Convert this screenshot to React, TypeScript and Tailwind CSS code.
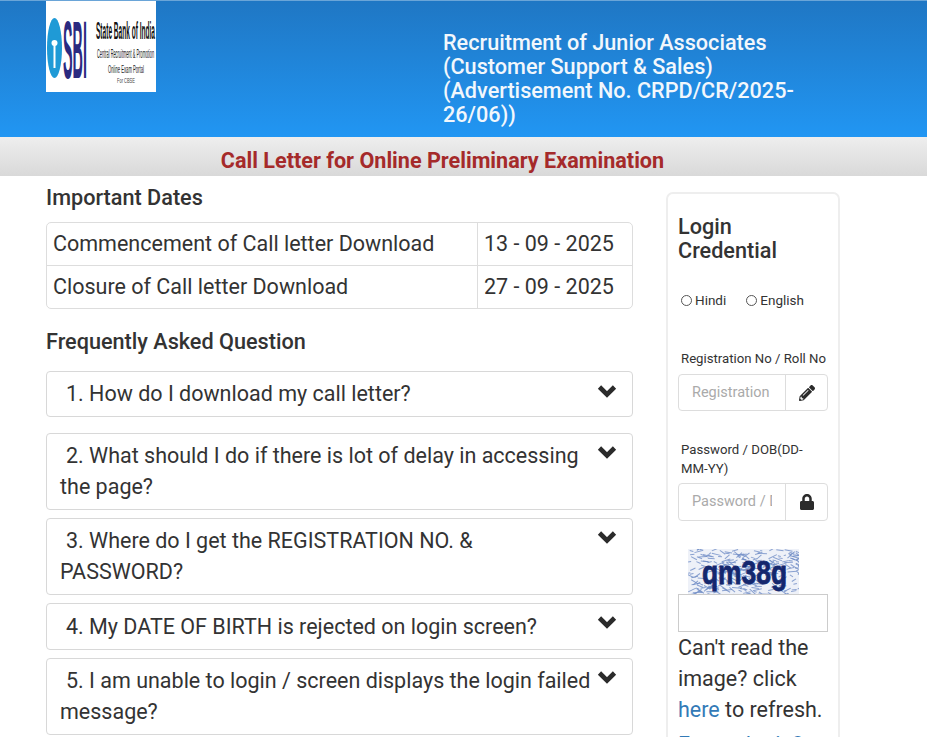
import React from 'react';
import { FaLock, FaPencilAlt } from 'react-icons/fa';

const faqs = [
  { q: '1. How do I download my call letter?', rest: '', h: 'h-[46px] mb-[16px] pt-[6px]', top: 'top-[12px]' },
  { q: '2. What should I do if there is lot of delay in accessing', rest: 'the page?', h: 'h-[77px] mb-[8px] pt-[6px]', top: 'top-[11px]' },
  { q: '3. Where do I get the REGISTRATION NO. &', rest: 'PASSWORD?', h: 'h-[77px] mb-[8px] pt-[6px]', top: 'top-[11px]' },
  { q: '4. My DATE OF BIRTH is rejected on login screen?', rest: '', h: 'h-[47px] mb-[8px] pt-[7px]', top: 'top-[11px]' },
  { q: '5. I am unable to login / screen displays the login failed', rest: 'message?', h: 'h-[77px] mb-[8px] pt-[6px]', top: 'top-[11px]' },
];

const SbiLogo = () => (
  <svg width="110" height="91" viewBox="0 1 110 91" className="block bg-white">
    <ellipse cx="8.5" cy="48" rx="7.5" ry="30" fill="#1f9ad6" />
    <circle cx="8.5" cy="43" r="3" fill="#fff" />
    <rect x="7.5" y="44" width="2" height="24" fill="#fff" />
    <text transform="translate(17 78) scale(0.175 1)" fontFamily="Liberation Sans" fontWeight="700" fontSize="82" fill="#2b2a80">SBI</text>
    <text transform="translate(50 39) scale(0.285 1)" fontFamily="Liberation Sans" fontWeight="700" fontSize="23" fill="#111">State Bank of India</text>
    <text transform="translate(51 58) scale(0.325 1)" fontFamily="Liberation Sans" fontSize="12" fill="#222">Central Recruitment &amp; Promotion</text>
    <text transform="translate(62 73) scale(0.417 1)" fontFamily="Liberation Sans" fontSize="10" fill="#222">Online Exam Portal</text>
    <text transform="translate(71 83) scale(0.57 1)" fontFamily="Liberation Sans" fontSize="7" fill="#444">For CBSE</text>
  </svg>
);

// small deterministic scatter for the captcha background
const scatter = (i: number) => {
  const v = Math.sin(i * 12.9898) * 43758.5453;
  return v - Math.floor(v);
};

const noise = Array.from({ length: 300 }, (_, i) => ({
  x: scatter(i) * 111,
  y: scatter(i + 1000) * 45,
  w: 2 + scatter(i + 2000) * 8,
  r: scatter(i + 3000) * 90 - 45,
}));

const Captcha = () => (
  <svg width="111" height="45" viewBox="0 0 111 45" className="block">
    <rect width="111" height="45" fill="#eef1f8" />
    {noise.map((n, i) => (
      <rect key={i} x={n.x} y={n.y} width={n.w} height="1" fill="#6f8cc6" opacity="0.8" transform={`rotate(${n.r} ${n.x} ${n.y})`} />
    ))}
    <text transform="translate(14 35) scale(0.8 1)" fontFamily="Liberation Sans" fontWeight="700" fontSize="33" fill="#14276e" stroke="#14276e" strokeWidth="0.8">qm38g</text>
  </svg>
);

const Chevron = ({ className }: { className: string }) => (
  <svg width="20" height="14" viewBox="0 0 20 14" className={className}>
    <polyline points="2.5,3 10,10.5 17.5,3" fill="none" stroke="#2b2b2b" strokeWidth="4.6" />
  </svg>
);

export default function App() {
  return (
    <div className="h-[737px] overflow-hidden bg-white font-['Roboto',sans-serif] text-[#333]">
      <header className="h-[137px] border-t border-[#6aa5d8] bg-gradient-to-b from-[#1f77c4] to-[#2196f3] flex">
        <div className="ml-[46px] w-[110px]">
          <SbiLogo />
        </div>
        <h1 className="ml-[287px] mt-[30px] w-[370px] text-[21.65px] leading-[24px] font-medium text-[#f2f7fc]">
          Recruitment of Junior Associates<br />(Customer Support &amp; Sales)<br />(Advertisement No. CRPD/CR/2025-26/06))
        </h1>
      </header>

      <div className="h-[39px] bg-gradient-to-b from-[#eeeeee] to-[#d9d9d9] flex justify-center pr-[42px] pt-[10px]">
        <h2 className="text-[21.6px] leading-[28px] font-bold text-[#a52a2a]">Call Letter for Online Preliminary Examination</h2>
      </div>

      <main className="flex pl-[46px]">
        <div className="w-[587px]">
          <h3 className="mt-[8px] h-[30px] text-[21.65px] leading-[28px] font-medium">Important Dates</h3>

          <div className="mt-[8px] border border-[#dddddd] rounded-[5px] text-[21.5px]">
            <div className="flex h-[43px] border-b border-[#dddddd]">
              <div className="w-[431px] px-[6px] leading-[42px] border-r border-[#dddddd]">Commencement of Call letter Download</div>
              <div className="px-[6px] leading-[42px]">13 - 09 - 2025</div>
            </div>
            <div className="flex h-[42px]">
              <div className="w-[431px] px-[6px] leading-[41px] border-r border-[#dddddd]">Closure of Call letter Download</div>
              <div className="px-[6px] leading-[41px]">27 - 09 - 2025</div>
            </div>
          </div>

          <h3 className="mt-[19px] mb-[13px] h-[30px] text-[21.65px] leading-[28px] font-medium">Frequently Asked Question</h3>

          {faqs.map((f) => (
            <div key={f.q} className={`relative ${f.h} border border-[#d8d8d8] rounded-[4px] px-[13px] text-[21.5px] leading-[31px]`}>
              <div className="pl-[6px] whitespace-nowrap">{f.q}</div>
              {f.rest && <div>{f.rest}</div>}
              <Chevron className={`absolute right-[15px] ${f.top}`} />
            </div>
          ))}
        </div>

        <aside className="ml-[33px] mt-[16px] w-[174px] h-[600px] border-2 border-[#eeeeee] rounded-[7px] px-[10px]">
          <h3 className="mt-[21px] text-[21.65px] leading-[24px] font-medium">Login<br />Credential</h3>

          <div className="mt-[27px] flex items-center text-[13.5px] pl-[3px] h-[20px]">
            <span className="w-[11px] h-[11px] rounded-full border border-[#555] mr-[3px]" />
            <span className="mr-[20px]">Hindi</span>
            <span className="w-[11px] h-[11px] rounded-full border border-[#555] mr-[3px]" />
            <span>English</span>
          </div>

          <label className="block mt-[39px] pl-[3px] text-[13.2px] leading-[19px] whitespace-nowrap">Registration No / Roll No</label>
          <div className="mt-[6px] flex h-[37px] border border-[#dddddd] rounded-[4px] text-[14.5px]">
            <input placeholder="Registration" className="w-[107px] pl-[13px] pr-[13px] border-r border-[#dddddd] outline-none placeholder:text-[#aaaaaa]" />
            <div className="flex-1 flex items-center justify-center text-[#2b2b2b]"><FaPencilAlt size={16} /></div>
          </div>

          <label className="block mt-[29px] pl-[3px] text-[13.2px] leading-[19px]">Password / DOB(DD-<br />MM-YY)</label>
          <div className="mt-[5px] flex h-[38px] border border-[#dddddd] rounded-[4px] text-[14.5px]">
            <input placeholder="Password / DOB" className="w-[107px] pl-[13px] pr-[13px] border-r border-[#dddddd] outline-none placeholder:text-[#aaaaaa]" />
            <div className="flex-1 flex items-center justify-center text-[#2b2b2b]"><FaLock size={16} /></div>
          </div>

          <div className="mt-[28px] ml-[10px]"><Captcha /></div>
          <div className="h-[38px] border border-[#cccccc]" />
          <p className="text-[21.5px] leading-[31px]">
            Can't read the image? click <span className="text-[#337ab7]">here</span> to refresh.
          </p>
          <p className="mt-[4px] text-[21.5px] leading-[31px] text-[#337ab7]">Forgot login?</p>
        </aside>
      </main>
    </div>
  );
}
